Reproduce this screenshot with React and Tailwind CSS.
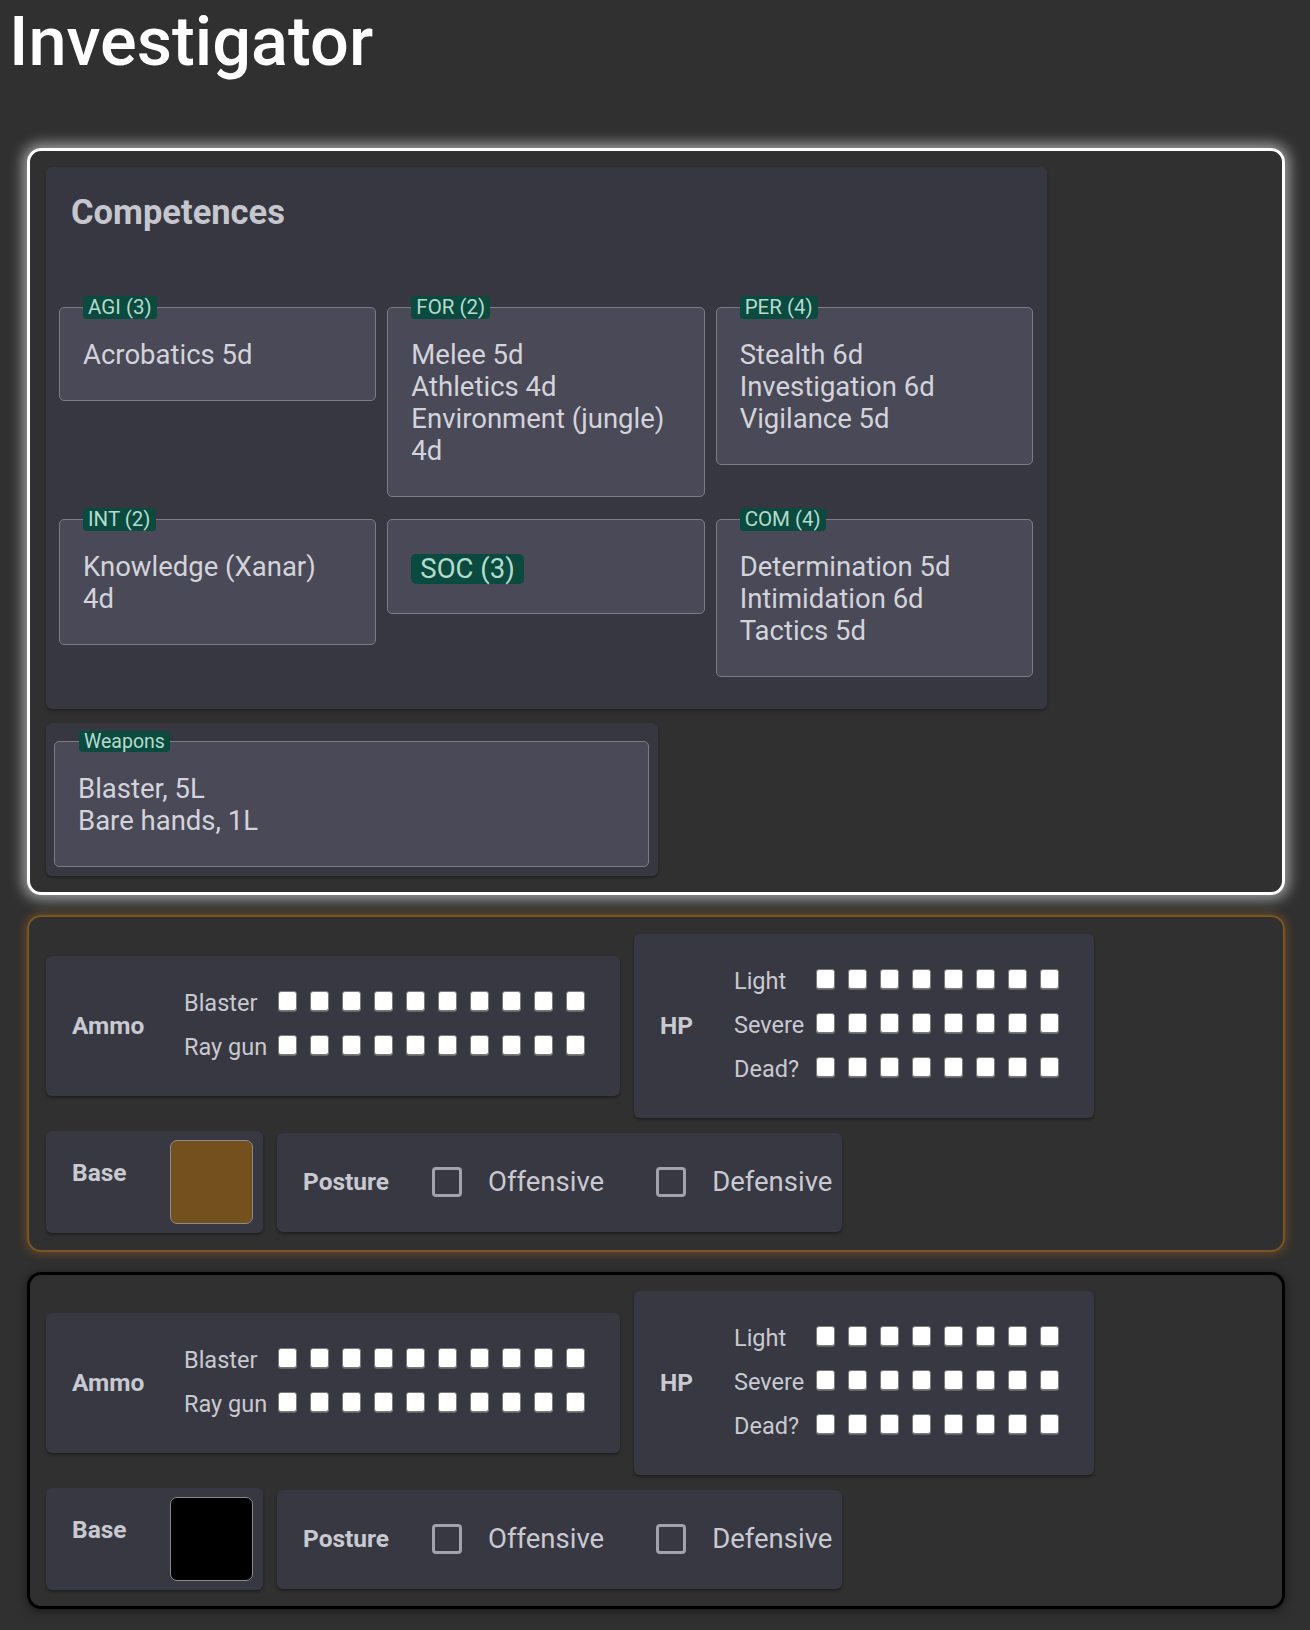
import React from 'react';

const competences = [
  { label: 'AGI (3)', lines: ['Acrobatics 5d'] },
  { label: 'FOR (2)', lines: ['Melee 5d', 'Athletics 4d', 'Environment (jungle) 4d'] },
  { label: 'PER (4)', lines: ['Stealth 6d', 'Investigation 6d', 'Vigilance 5d'] },
  { label: 'INT (2)', lines: ['Knowledge (Xanar) 4d'] },
  { label: null, badge: 'SOC (3)', lines: [] },
  { label: 'COM (4)', lines: ['Determination 5d', 'Intimidation 6d', 'Tactics 5d'] },
];

const ammo = [
  { name: 'Blaster', count: 10 },
  { name: 'Ray gun', count: 10 },
];

const hp = [
  { name: 'Light', count: 8 },
  { name: 'Severe', count: 8 },
  { name: 'Dead?', count: 8 },
];

function Box() {
  return (
    <span className="block w-[19px] h-[20px] bg-white border border-[#7a7a7a] rounded-[3px] shadow-[0_1px_0_#666]" />
  );
}

function Tracker({ title, rows, titleClass, labelClass }) {
  return (
    <div className="flex items-center bg-[#383842] rounded-[6px] shadow-[0_2px_3px_rgba(0,0,0,0.35)] pl-[26px] py-[26px] whitespace-nowrap">
      <span className={`text-[24.5px] font-bold text-[#c9c9d1] ${titleClass}`}>{title}</span>
      <div className="flex flex-col">
        {rows.map((row) => (
          <div key={row.name} className="flex items-center h-[44px]">
            <span className={`text-[23.5px] text-[#c9c9d1] ${labelClass}`}>{row.name}</span>
            <div className="flex gap-[13px] mb-[6px]">
              {Array.from({ length: row.count }).map((_, i) => (
                <Box key={i} />
              ))}
            </div>
          </div>
        ))}
      </div>
    </div>
  );
}

function Checkbox() {
  return <span className="block w-[30px] h-[30px] border-[3px] border-[#a2a2aa] rounded-[4px]" />;
}

function StatusPanel({ swatch, frame }) {
  return (
    <div className={frame}>
      <div className="flex flex-wrap items-center gap-x-[14px] gap-y-[13px]">
        <div className="w-[574px]">
          <Tracker title="Ammo" rows={ammo} titleClass="w-[112px]" labelClass="w-[94px]" />
        </div>
        <div className="w-[460px]">
          <Tracker title="HP" rows={hp} titleClass="w-[74px]" labelClass="w-[82px]" />
        </div>
        <div className="w-[217px] h-[102px] flex items-center bg-[#383842] rounded-[6px] shadow-[0_2px_3px_rgba(0,0,0,0.35)] pl-[26px] pr-[10px]">
          <span className="w-[98px] text-[24.5px] font-bold text-[#c9c9d1] mb-[18px]">Base</span>
          <span className={`block w-[83px] h-[84px] rounded-[7px] border border-[#8a8a8a] ${swatch}`} />
        </div>
        <div className="w-[565px] h-[99px] flex items-center bg-[#383842] rounded-[6px] shadow-[0_2px_3px_rgba(0,0,0,0.35)] pl-[26px] pr-[8px] whitespace-nowrap">
          <span className="text-[24.5px] font-bold text-[#c9c9d1] mr-[43px]">Posture</span>
          <Checkbox />
          <span className="text-[27.5px] text-[#c9c9d1] ml-[26px] mr-[52px]">Offensive</span>
          <Checkbox />
          <span className="text-[27.5px] text-[#c9c9d1] ml-[26px]">Defensive</span>
        </div>
      </div>
    </div>
  );
}

function Field({ label, badge, lines, small }) {
  return (
    <div className="relative mt-[11px] bg-[#4a4957] border border-[#7c7b86] rounded-[5px] pt-[31px] pb-[29px] px-[23px]">
      {label && (
        <span
          className={
            small
              ? 'absolute -top-[11px] left-[24px] h-[21px] px-[5px] bg-[#0b4a3f] text-[#b5dbcd] text-[19.5px] leading-[21px] rounded-[4px]'
              : 'absolute -top-[12px] left-[23px] h-[23px] px-[5px] bg-[#0b4a3f] text-[#b5dbcd] text-[20.5px] leading-[23px] rounded-[4px]'
          }
        >
          {label}
        </span>
      )}
      <div className="text-[27.5px] leading-[32px] text-[#d3d3db]">
        {badge && (
          <span className="inline-block align-middle px-[9px] h-[30px] leading-[30px] bg-[#0b4a3f] text-[#b5dbcd] rounded-[5px]">
            {badge}
          </span>
        )}
        {lines.map((line) => (
          <div key={line}>{line}</div>
        ))}
      </div>
    </div>
  );
}

export default function App() {
  return (
    <div className="min-h-screen bg-[#303030] pt-[2px] pb-[20px] font-['Roboto',sans-serif]">
      <h1 className="pl-[9px] text-[68.5px] leading-[80px] font-medium text-white">Investigator</h1>

      <div className="pl-[27px] pr-[25px] mt-[66px] flex flex-col gap-[20px]">
        <div className="border-[3px] border-white rounded-[14px] shadow-[0_0_14px_4px_rgba(255,255,255,0.55)] p-4">
          <div className="w-[1001px] bg-[#373741] rounded-[6px] shadow-[0_2px_3px_rgba(0,0,0,0.3)] pl-[13px] pr-[14px] pt-[26px] pb-[32px]">
            <h2 className="ml-[12px] text-[34.5px] leading-[38px] font-bold text-[#c6c6ce] mb-[65px]">Competences</h2>
            <div className="grid grid-cols-3 gap-[11px] items-start">
              {competences.map((c, i) => (
                <Field key={i} label={c.label} badge={c.badge} lines={c.lines} />
              ))}
            </div>
          </div>

          <div className="mt-[14px] w-[612px] bg-[#373741] rounded-[6px] shadow-[0_2px_3px_rgba(0,0,0,0.3)] pl-[8px] pr-[9px] pt-[9px] pb-[9px]">
            <div className="mt-[-2px]">
              <Field label="Weapons" lines={['Blaster, 5L', 'Bare hands, 1L']} small />
            </div>
          </div>
        </div>

        <StatusPanel
          swatch="bg-[#74501f]"
          frame="border-2 border-[#7b5523] rounded-[14px] shadow-[0_0_10px_2px_rgba(160,100,30,0.45)] p-[17px]"
        />

        <StatusPanel
          swatch="bg-black"
          frame="border-[3px] border-black rounded-[14px] shadow-[0_2px_10px_rgba(0,0,0,0.5)] p-4"
        />
      </div>
    </div>
  );
}
